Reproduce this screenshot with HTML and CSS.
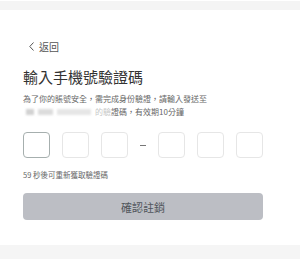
FILE: index.html
```html
<!DOCTYPE html>
<html lang="zh-Hant">
<head>
  <meta charset="UTF-8" />
  <meta name="viewport" content="width=device-width, initial-scale=1.0"/>
  <title>輸入手機號驗證碼</title>
  <link rel="stylesheet" href="styles.css">
</head>
<body>

  <div class="topbar"></div>

  <div class="page">
    <div class="back">
      <svg class="chevron" width="5" height="9" viewBox="0 0 5 9">
        <polyline points="4.5,0.5 0.8,4.5 4.5,8.5" fill="none" stroke="#555" stroke-width="1" />
      </svg>
      <span>返回</span>
    </div>

    <h1>輸入手機號驗證碼</h1>

    <p class="desc">
      為了你的賬號安全，需完成身份驗證，請輸入發送至<br>
      <span class="masked"><i class="blk b1"></i><i class="blk b2"></i><i class="blk b3"></i></span><span class="faded">的驗</span>證碼，有效期10分鐘
    </p>

    <div class="code-row">
      <div class="box active"></div>
      <div class="box"></div>
      <div class="box"></div>
      <div class="dash"></div>
      <div class="box"></div>
      <div class="box"></div>
      <div class="box"></div>
    </div>

    <p class="countdown">59 秒後可重新獲取驗證碼</p>

    <button class="confirm" disabled>確認註銷</button>
  </div>

  <div class="bottombar"></div>

</body>
</html>
```

FILE: styles.css
```css
* {
  box-sizing: border-box;
  margin: 0;
  padding: 0;
}

body {
  font-family: "Noto Sans CJK TC", "Noto Sans", sans-serif;
  background-color: #fff;
  color: #333;
  overflow: hidden;
}

.topbar {
  height: 9px;
  margin-top: 1px;
  background-color: #f4f4f4;
}

.page {
  padding: 0 37px 0 23px;
}

.back {
  display: flex;
  align-items: center;
  gap: 5px;
  height: 14px;
  margin-top: 29px;
  padding-left: 6px;
  font-size: 10px;
  color: #555;
}

.chevron {
  display: block;
}

h1 {
  margin-top: 14px;
  font-size: 15px;
  line-height: 20px;
  font-weight: 400;
  color: #333;
}

.desc {
  margin-top: 5px;
  font-size: 8px;
  line-height: 13px;
  color: #666;
}

/* blurred phone number */
.masked {
  display: inline-flex;
  align-items: center;
  gap: 4px;
  width: 72px;
  height: 13px;
  padding-left: 3px;
  vertical-align: top;
  filter: blur(1px);
}

.blk {
  display: block;
  height: 6px;
  background-color: #dcdcdc;
}

.b1 { width: 8px; background-color: #d2d2d2; }
.b2 { width: 15px; }
.b3 { width: 34px; background-color: #e6e6e6; }

.faded {
  color: #c8c8c8;
}

.code-row {
  display: flex;
  align-items: center;
  gap: 12px;
  margin-top: 14px;
}

.box {
  width: 27px;
  height: 26px;
  border: 1px solid #e6e6e6;
  border-radius: 4px;
}

.box.active {
  border-color: #a6afae;
}

.dash {
  width: 6px;
  height: 1px;
  background-color: #777;
}

.countdown {
  margin-top: 11px;
  font-size: 7.5px;
  line-height: 11px;
  color: #666;
}

.confirm {
  display: block;
  width: 100%;
  height: 27px;
  margin-top: 13px;
  border: none;
  border-radius: 4px;
  background-color: #bcbec4;
  color: #50555b;
  font-family: inherit;
  font-size: 11px;
}

.bottombar {
  height: 14px;
  margin-top: 25px;
  background-color: #f5f5f5;
}
```
